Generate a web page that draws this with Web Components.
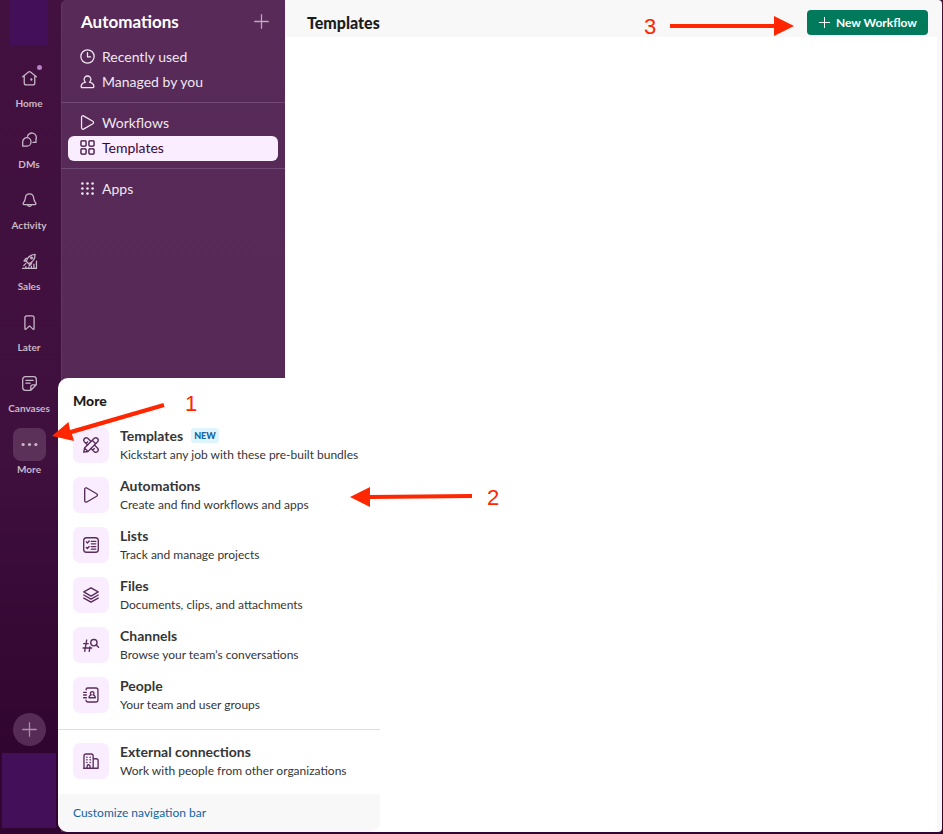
<!DOCTYPE html>
<html lang="en">
<head>
<meta charset="utf-8">
<title>Templates - Automations</title>
<style>
  html, body { margin: 0; }
  body { font-family: Lato, "Liberation Sans", sans-serif; font-size: 14px; color: #1d1c1d; }
</style>
</head>
<body>
<app-window>
  <nav-rail slot="rail">
    <rail-item icon="home" label="Home" dot></rail-item>
    <rail-item icon="dms" label="DMs"></rail-item>
    <rail-item icon="bell" label="Activity"></rail-item>
    <rail-item icon="rocket" label="Sales"></rail-item>
    <rail-item icon="bookmark" label="Later"></rail-item>
    <rail-item icon="canvas" label="Canvases"></rail-item>
    <rail-item icon="more" label="More" active></rail-item>
  </nav-rail>
  <side-bar slot="side" heading="Automations">
    <side-group>
      <side-link icon="clock">Recently used</side-link>
      <side-link icon="person">Managed by you</side-link>
    </side-group>
    <side-group>
      <side-link icon="play">Workflows</side-link>
      <side-link icon="grid" selected>Templates</side-link>
    </side-group>
    <side-group>
      <side-link icon="apps">Apps</side-link>
    </side-group>
  </side-bar>
  <main-view slot="main" heading="Templates" action="New Workflow"></main-view>
  <more-menu slot="overlay" heading="More">
    <menu-entry icon="tools" heading="Templates" badge="NEW">Kickstart any job with these pre-built bundles</menu-entry>
    <menu-entry icon="play" heading="Automations">Create and find workflows and apps</menu-entry>
    <menu-entry icon="list" heading="Lists">Track and manage projects</menu-entry>
    <menu-entry icon="layers" heading="Files">Documents, clips, and attachments</menu-entry>
    <menu-entry icon="channels" heading="Channels">Browse your team’s conversations</menu-entry>
    <menu-entry icon="people" heading="People">Your team and user groups</menu-entry>
    <menu-entry slot="extra" icon="building" heading="External connections">Work with people from other organizations</menu-entry>
    <span slot="footer">Customize navigation bar</span>
  </more-menu>
  <step-arrows slot="overlay"></step-arrows>
</app-window>

<script>
const ICONS = {
  home: '<path d="M2 8 8.8 2.4a2 2 0 0 1 2.4 0L18 8M3.8 7v8.2a2.3 2.3 0 0 0 2.3 2.3h7.8a2.3 2.3 0 0 0 2.3-2.3V7"/><rect x="11" y="9.6" width="2.4" height="3" rx="1" fill="currentColor" stroke="none"/>',
  dms: '<path d="M7.6 6.4A5.3 5.3 0 1 1 17.6 9.8v3.6H14"/><path d="M2 17.8v-5A4.9 4.9 0 1 1 6.9 17.7H2z"/>',
  bell: '<path d="M10 2.2c-3 0-4.700 2.200-4.900 4.800-.2 3.200-1 4.200-2.300 5.800-.8 1-.3 2 .9 2h12.600c1.200 0 1.700-1 .9-2-1.300-1.600-2.100-2.600-2.300-5.800C14.700 4.400 13 2.200 10 2.200z"/><path d="M7.700 15.200a2.400 2.400 0 0 0 4.600 0"/>',
  rocket: '<path d="M6.200 9.800C7.500 5.600 11 2.200 16.600 1.700 16.600 7 13.600 10.600 9.200 12.600zM6.400 9.200 3.600 9.400 5.800 6.400 8 6M9.600 12.200 9.800 15 12.200 12.700 12.800 10.200M3.200 14.800 5.800 12.200"/><circle cx="12.400" cy="6" r="1"/><path d="M1.800 18.200h16.400V9.500M15.200 18v-5M12.200 18v-2.500M9 18v-1.500M5.800 18v-2"/>',
  bookmark: '<path d="M4.600 4.500A2.200 2.200 0 0 1 6.800 2.300h6.400a2.200 2.200 0 0 1 2.200 2.200v12.800c0 .7-.8 1-1.300.5L10 14l-4.100 3.800c-.5.5-1.300.2-1.300-.5z"/>',
  canvas: '<path d="M11.500 18H5.200A3.200 3.200 0 0 1 2 14.800V5.200A3.200 3.200 0 0 1 5.200 2h9.600A3.200 3.200 0 0 1 18 5.200v6.300L11.500 18v-4.200a2.300 2.300 0 0 1 2.300-2.300H18M5.700 6.200h8.600M5.700 9.600h5"/>',
  more: '<g fill="currentColor" stroke="none"><circle cx="2.500" cy="10" r="1.900"/><circle cx="10" cy="10" r="1.900"/><circle cx="17.500" cy="10" r="1.900"/></g>',
  plus: '<path d="M10 2v16M2 10h16"/>',
  clock: '<circle cx="10" cy="10" r="7.800"/><path d="M10 5.600V10.500h3.600"/>',
  person: '<path d="M7.700 10.800a4 4 0 1 1 4.600 0c3 .7 5 2.500 5.200 5 .1.800-.5 1.400-1.300 1.400H3.800c-.8 0-1.400-.6-1.300-1.400.2-2.500 2.200-4.300 5.200-5z"/>',
  play: '<path d="M3 3.700c0-1.300 1.200-2 2.300-1.500l11 6.400c1.100.6 1.100 2.200 0 2.800l-11 6.400c-1.100.5-2.300-.2-2.300-1.500z"/>',
  grid: '<rect x="2.300" y="2.300" width="6" height="6" rx="1"/><rect x="11.700" y="2.300" width="6" height="6" rx="1"/><rect x="2.300" y="11.700" width="6" height="6" rx="1"/><rect x="11.700" y="11.700" width="6" height="6" rx="1"/>',
  apps: '<g fill="currentColor" stroke="none">' + [4, 10, 16].map(y => [4, 10, 16].map(x => `<circle cx="${x}" cy="${y}" r="1.500"/>`).join('')).join('') + '</g>',
  tools: '<path d="M2 18 2.800 13.400 13.600 2.600a2.700 2.700 0 0 1 3.800 3.800L6.600 17.200zM11.400 4.800l3.800 3.800M2.800 13.400l3.800 3.800"/><path d="M6.200 10 2.600 6.400a2.700 2.700 0 0 1 3.800-3.800L10 6.200M10 13.800l3.600 3.600a2.700 2.700 0 0 0 3.800-3.800L13.800 10M4.600 8.300 6.300 6.600M12 15.600l1.700-1.700"/>',
  list: '<rect x="1.900" y="1.900" width="16.200" height="16.200" rx="3.200"/><path d="M4.800 6.500 6 7.700 8 5.500M4.800 12.700 6 13.900 8 11.700M10.300 6h5M10.300 8.700h5M10.300 11.800h5M10.300 14.500h5"/>',
  layers: '<path d="M10 2 18 6.600 10 11.200 2 6.600zM2 10l8 4.600 8-4.600M2 13.400 10 18l8-4.600"/>',
  channels: '<path d="M5.200 4.500 3 17M8.900 12 8 17M1.900 8.500h5M1.200 13.300h9.600"/><circle cx="13.200" cy="7.400" r="3.500"/><path d="m15.800 10 2.600 2.600"/>',
  people: '<path d="M4.500 4.200a2 2 0 0 1 2-2h9.200a2 2 0 0 1 2 2v11.600a2 2 0 0 1-2 2H6.500a2 2 0 0 1-2-2M1.800 7h3M1.800 10h3M1.800 13h3"/><path d="M10.300 9.900a2 2 0 1 1 2 0c1.600.3 2.400 1.200 2.500 3.200h-7c.1-2 .9-2.900 2.500-3.200z"/>',
  building: '<path d="M2.200 18V4.400a2.200 2.200 0 0 1 2.200-2.200h5.800a2.200 2.200 0 0 1 2.200 2.200V18M12.500 7.500h3.200a2.200 2.200 0 0 1 2.200 2.200V18H1.800M5.700 18v-2.200a1.600 1.600 0 0 1 3.200 0V18"/><g fill="currentColor" stroke="none"><circle cx="5.500" cy="5.800" r=".9"/><circle cx="9.100" cy="5.800" r=".9"/><circle cx="5.500" cy="8.700" r=".9"/><circle cx="9.100" cy="8.700" r=".9"/><circle cx="5.500" cy="11.600" r=".9"/><circle cx="9.100" cy="11.600" r=".9"/></g>'
};

function define(name, render) {
  customElements.define(name, class extends HTMLElement {
    constructor() {
      super();
      this.attachShadow({ mode: 'open' });
    }
    connectedCallback() {
      const t = document.createElement('template');
      t.innerHTML = render(this);
      this.shadowRoot.replaceChildren(t.content.cloneNode(true));
    }
  });
}

define('ui-icon', el => `
  <style>
    :host { display: inline-flex; flex: none; width: var(--icon-size, 17px); height: var(--icon-size, 17px); }
    svg { width: 100%; height: 100%; fill: none; stroke: currentColor; stroke-width: 1.5; stroke-linecap: round; stroke-linejoin: round; }
  </style>
  <svg viewBox="0 0 20 20" aria-hidden="true">${ICONS[el.getAttribute('name')]}</svg>`);

define('app-window', () => `
  <style>
    :host { display: grid; grid-template-columns: 61px 224px minmax(0, 1fr); min-height: 100vh; box-sizing: border-box;
      position: relative; padding: 0 1px 2px 0; background: linear-gradient(#42113f, #3f0f3e 55%, #30052f 90%); }
    ::slotted([slot=rail]), ::slotted([slot=side]), ::slotted([slot=main]) { min-width: 0; }
  </style>
  <slot name="rail"></slot><slot name="side"></slot><slot name="main"></slot><slot name="overlay"></slot>`);

define('nav-rail', () => `
  <style>
    :host { display: flex; flex-direction: column; align-items: center; padding-right: 3px; }
    .logo { width: 38px; height: 45px; background: #430f58; }
    nav { display: flex; flex-direction: column; gap: 12px; width: 100%; padding-top: 17px; }
    button { margin-top: auto; width: 33px; height: 33px; border: 0; padding: 0; border-radius: 50%; display: grid; place-items: center;
      background: #562b55; color: #a98eaa; --icon-size: 17px; }
    .profile { width: 54px; height: 75px; margin: 7px 0 4px; background: #430f58; }
  </style>
  <div class="logo"></div>
  <nav aria-label="Workspace"><slot></slot></nav>
  <button type="button" aria-label="Create new"><ui-icon name="plus"></ui-icon></button>
  <div class="profile"></div>`);

define('rail-item', el => `
  <style>
    :host { display: block; }
    button { all: unset; display: flex; flex-direction: column; align-items: center; width: 100%; color: #c9b8c9; }
    .tile { position: relative; display: grid; place-items: center; width: 33px; height: 33px; border-radius: 8px; --icon-size: 17px; }
    :host([active]) .tile { background: #5c3159; }
    .dot { position: absolute; top: 3px; right: 4px; width: 5px; height: 5px; border-radius: 50%; background: #b77fc6; }
    .label { font-size: 10px; line-height: 16px; font-weight: 700; }
  </style>
  <button type="button"><span class="tile"><ui-icon name="${el.getAttribute('icon')}"></ui-icon>${el.hasAttribute('dot') ? '<span class="dot"></span>' : ''}</span>
  <span class="label">${el.getAttribute('label')}</span></button>`);

define('side-bar', el => `
  <style>
    :host { display: block; background: linear-gradient(#572a58, #552857); border-radius: 6px 0 0 0; box-shadow: inset 1px 0 #60365f; color: #fff; }
    header { display: flex; align-items: center; justify-content: space-between; height: 43px; padding: 0 15px 0 20px; }
    h2 { margin: 0; font-size: 17px; font-weight: 700; line-height: 24px; }
    button { all: unset; display: flex; color: #bda8bd; --icon-size: 17px; }
  </style>
  <header><h2>${el.getAttribute('heading')}</h2><button type="button" aria-label="Add"><ui-icon name="plus"></ui-icon></button></header>
  <slot></slot>`);

define('side-group', () => `
  <style>
    :host { display: block; padding: 8px 7px 7px; border-bottom: 1px solid #704873; }
    :host(:first-of-type) { padding-top: 2px; }
    :host(:last-of-type) { border: 0; }
  </style><slot></slot>`);

define('side-link', el => `
  <style>
    :host { display: block; }
    a { display: flex; align-items: center; gap: 6px; box-sizing: border-box; height: 25px; padding: 0 11px 2px; border-radius: 6px; color: #f0e8f0;
      text-decoration: none; font-size: 14px; line-height: 20px; --icon-size: 17px; }
    :host([selected]) a { background: #f9edff; color: #39063a; }
  </style>
  <a href="#"><ui-icon name="${el.getAttribute('icon')}"></ui-icon><slot></slot></a>`);

define('main-view', el => `
  <style>
    :host { display: flex; flex-direction: column; background: #f8f8f8; border-radius: 0 4px 4px 0; }
    header { display: flex; align-items: center; justify-content: space-between; padding: 10px 14px 2px 22px; }
    h1 { margin: 0; font-size: 16px; font-weight: 900; line-height: 24px; }
    button { display: flex; align-items: center; gap: 5px; height: 25px; padding: 0 11px; border: 0; border-radius: 4px;
      background: #007a5a; color: #fff; font: 700 12px/20px Lato, "Liberation Sans", sans-serif; --icon-size: 13px; }
    .canvas { flex: 1; margin-right: 5px; background: #fff; }
  </style>
  <header><h1>${el.getAttribute('heading')}</h1><button type="button"><ui-icon name="plus"></ui-icon>${el.getAttribute('action')}</button></header>
  <div class="canvas"></div>`);

define('more-menu', el => `
  <style>
    :host { position: absolute; left: 58px; bottom: 2px; width: 322px; border-radius: 10px; overflow: hidden; background: #fff; }
    h2 { margin: 0; padding: 13px 15px 16px; font-size: 14px; font-weight: 900; line-height: 20px; }
    .list { display: flex; flex-direction: column; gap: 14px; padding: 0 15px 16px; }
    .extra { padding: 13px 15px 15px; border-top: 1px solid #dedede; }
    footer { padding: 9px 15px; background: #f8f8f8; }
    a { display: block; color: #1264a3; text-decoration: none; font-size: 12px; line-height: 20px; }
  </style>
  <h2>${el.getAttribute('heading')}</h2>
  <div class="list"><slot></slot></div>
  <div class="extra"><slot name="extra"></slot></div>
  <footer><a href="#"><slot name="footer"></slot></a></footer>`);

define('menu-entry', el => `
  <style>
    :host { display: block; }
    a { display: flex; align-items: center; gap: 11px; height: 36px; color: #363536; text-decoration: none; }
    .tile { display: grid; place-items: center; flex: none; width: 36px; height: 36px; border-radius: 7px; background: #f9edff; color: #592c5b; --icon-size: 18px; }
    .title { display: flex; align-items: center; gap: 8px; font-size: 14px; line-height: 19px; font-weight: 700; }
    .sub { font-size: 12px; line-height: 19px; }
    .badge { padding: 0 3px; border-radius: 3px; background: #e0f4fd; color: #1264a3; font-size: 9px; line-height: 15px; font-weight: 900; }
  </style>
  <a href="#"><span class="tile"><ui-icon name="${el.getAttribute('icon')}"></ui-icon></span>
  <div><div class="title">${el.getAttribute('heading')}${el.hasAttribute('badge') ? `<span class="badge">${el.getAttribute('badge')}</span>` : ''}</div>
  <div class="sub"><slot></slot></div></div></a>`);

define('step-arrows', () => `
  <style>
    :host { position: absolute; inset: 0; pointer-events: none; }
    svg { width: 100%; height: 100%; display: block; overflow: visible; }
    text { font: 22px "Liberation Sans", Arial, sans-serif; }
  </style>
  <svg fill="#ff2600" stroke="none">
    <path d="M52 436 68.500 422 70 430 163.400 403 164.600 407 72 434 74 441z"/>
    <path d="M350 497 370 487V495L472 494V498L370 499V507z"/>
    <path d="M670 24H774V16L794 26 774 36V28H670z"/>
    <text x="185" y="411">1</text><text x="487" y="505">2</text><text x="644" y="34">3</text>
  </svg>`);
</script>
</body>
</html>
